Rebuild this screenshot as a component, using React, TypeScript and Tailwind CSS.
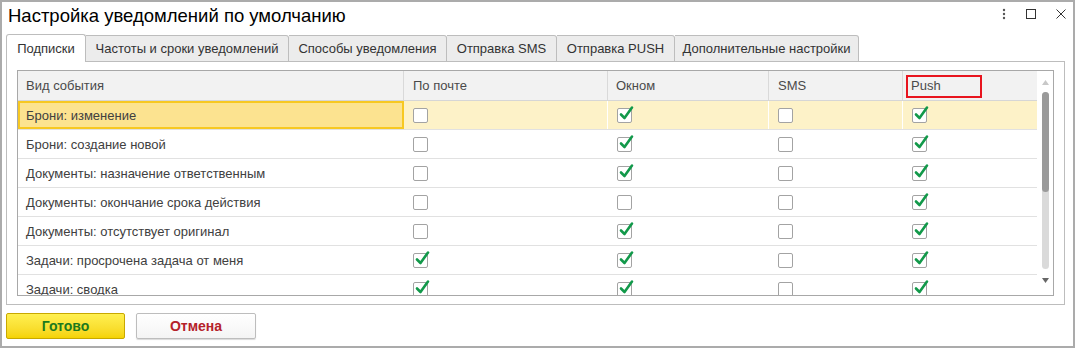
import React from "react";

const rows: { name: string; v: boolean[] }[] = [
  { name: "Брони: изменение", v: [false, true, false, true] },
  { name: "Брони: создание новой", v: [false, true, false, true] },
  { name: "Документы: назначение ответственным", v: [false, true, false, true] },
  { name: "Документы: окончание срока действия", v: [false, false, false, true] },
  { name: "Документы: отсутствует оригинал", v: [false, true, false, true] },
  { name: "Задачи: просрочена задача от меня", v: [true, true, false, true] },
  { name: "Задачи: сводка", v: [true, true, false, true] },
];

const tabs = [
  { label: "Подписки", w: "w-[80px]" },
  { label: "Частоты и сроки уведомлений", w: "w-[203px]" },
  { label: "Способы уведомления", w: "w-[158px]" },
  { label: "Отправка SMS", w: "w-[110px]" },
  { label: "Отправка PUSH", w: "w-[118px]" },
  { label: "Дополнительные настройки", w: "w-[184px]" },
];

const cols = ["w-[204px]", "w-[161px]", "w-[134px]", "w-[134px]"];

function Check({ on }: { on: boolean }) {
  return (
    <div className="relative w-[15px] h-[15px] rounded-[2px] border border-[#a3a3a3] bg-white">
      {on && (
        <svg className="absolute -top-[4px] left-[1px]" width="15" height="16" viewBox="0 0 15 16">
          <path d="M2 9.5 L5.5 13 L13 2.5" fill="none" stroke="#12994a" strokeWidth="2.6" strokeLinecap="round" strokeLinejoin="round" />
        </svg>
      )}
    </div>
  );
}

export default function App() {
  return (
    <div className="w-[1075px] h-[348px] border-2 border-[#ababab] bg-white flex flex-col font-['Liberation_Sans',Arial,sans-serif] text-[#404040] overflow-hidden">
      {/* title bar */}
      <div className="h-[32px] flex items-center pl-[6px] pr-[6px] shrink-0">
        <div className="text-[18.5px] text-black -mt-[4px]">Настройка уведомлений по умолчанию</div>
        <div className="ml-auto flex items-center gap-[20px] -mt-[8px]">
          <svg width="4" height="12" viewBox="0 0 4 12">
            <circle cx="2" cy="2" r="1.2" fill="#555" />
            <circle cx="2" cy="6" r="1.2" fill="#555" />
            <circle cx="2" cy="10" r="1.2" fill="#555" />
          </svg>
          <svg width="10" height="10" viewBox="0 0 10 10">
            <rect x="0.5" y="0.5" width="9" height="9" fill="none" stroke="#333" />
          </svg>
          <svg width="10" height="10" viewBox="0 0 10 10" className="mr-[1px]">
            <path d="M0.5 0.5 L9.5 9.5 M9.5 0.5 L0.5 9.5" stroke="#333" strokeWidth="1" />
          </svg>
        </div>
      </div>

      {/* tabs */}
      <div className="flex h-[27px] ml-[4px] shrink-0 relative z-10">
        {tabs.map((t, i) =>
          i === 0 ? (
            <div
              key={t.label}
              className={`${t.w} h-[28px] bg-white border border-b-0 border-[#bdbdbd] rounded-t-[3px] flex items-center justify-center text-[13px] text-[#333]`}
            >
              {t.label}
            </div>
          ) : (
            <div
              key={t.label}
              className={`${t.w} h-[27px] mt-[1px] bg-[#ececec] border border-l-0 border-[#bdbdbd] rounded-tr-[3px] flex items-center justify-center text-[13px] text-[#333]`}
            >
              {t.label}
            </div>
          )
        )}
      </div>

      {/* panel */}
      <div className="ml-[4px] w-[1059px] h-[244px] border border-[#bdbdbd] pt-[8px] pl-[10px] shrink-0">
        <div className="w-[1037px] h-[226px] border border-[#a8a8a8] flex overflow-hidden">
          <div className="w-[1019px] flex flex-col">
            {/* header */}
            <div className="h-[30px] shrink-0 flex bg-[#f2f2f2] border-b border-[#d6d6d6] text-[13px] text-[#4a4a4a]">
              <div className="w-[386px] border-r border-[#d9d9d9] flex items-center pl-[8px]">Вид события</div>
              <div className="w-[204px] border-r border-[#d9d9d9] flex items-center pl-[9px]">По почте</div>
              <div className="w-[161px] border-r border-[#d9d9d9] flex items-center pl-[8px]">Окном</div>
              <div className="w-[134px] border-r border-[#d9d9d9] flex items-center pl-[9px]">SMS</div>
              <div className="w-[134px] flex items-center pl-[3px]">
                <span className="border-2 border-[#e8141e] w-[76px] h-[23px] flex items-center pl-[3px] mt-[1px]">Push</span>
              </div>
            </div>
            {/* rows */}
            {rows.map((r, i) => {
              const sel = i === 0;
              return (
                <div
                  key={r.name}
                  className={`h-[29px] shrink-0 flex border-b border-[#e1e1e1] text-[13px] ${sel ? "bg-[#fdf2c8]" : "bg-white"}`}
                >
                  <div
                    className={`w-[386px] flex items-center pt-[2px] ${sel ? "bg-[#fce390] border-2 border-[#f7c822] pl-[6px]" : "pl-[8px]"}`}
                  >
                    {r.name}
                  </div>
                  {r.v.map((on, j) => (
                    <div
                      key={j}
                      className={`${cols[j]} flex items-center pl-[9px] ${sel && j < 3 ? "border-r border-white" : ""}`}
                    >
                      <Check on={on} />
                    </div>
                  ))}
                </div>
              );
            })}
          </div>
          {/* scrollbar */}
          <div className="w-[16px] flex flex-col items-center pt-[9px]">
            <svg width="7" height="5" viewBox="0 0 7 5">
              <path d="M0 5 L3.5 0 L7 5 Z" fill="#c8c8c8" />
            </svg>
            <div className="mt-[7px] w-[7px] h-[177px] rounded-full bg-[#dadada] flex flex-col">
              <div className="h-[100px] rounded-full bg-[#9a9a9a]" />
            </div>
            <svg className="mt-[9px]" width="7" height="5" viewBox="0 0 7 5">
              <path d="M0 0 L7 0 L3.5 5 Z" fill="#666" />
            </svg>
          </div>
        </div>
      </div>

      {/* buttons */}
      <div className="flex gap-[11px] pl-[4px] mt-[8px]">
        <button className="w-[119px] h-[26px] rounded-[2px] border border-[#c8a800] bg-gradient-to-b from-[#fff04f] to-[#f5d300] text-[14px] font-bold text-[#1d7a1d]">
          Готово
        </button>
        <button className="w-[120px] h-[26px] rounded-[2px] border border-[#bdbdbd] bg-gradient-to-b from-white to-[#f4f4f4] shadow-[0_1px_1px_rgba(0,0,0,0.15)] text-[14px] font-bold text-[#b5222a]">
          Отмена
        </button>
      </div>
    </div>
  );
}
